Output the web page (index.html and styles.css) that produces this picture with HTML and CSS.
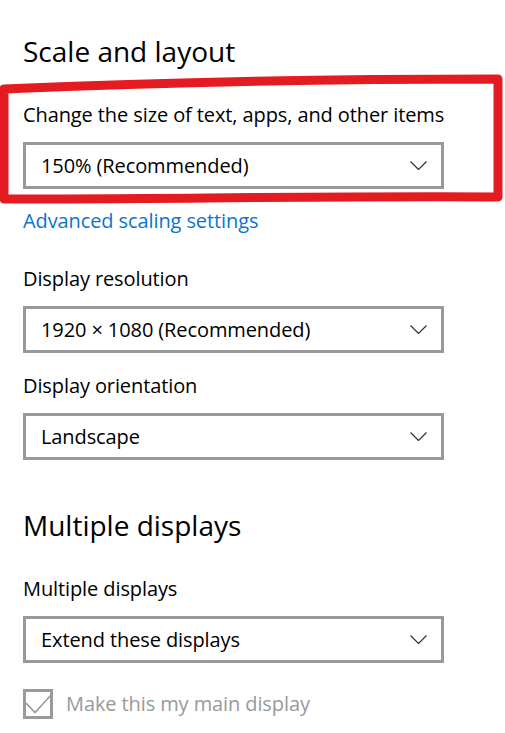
FILE: index.html
```html
<!DOCTYPE html>
<html lang="en">
<head>
<meta charset="utf-8">
<title>Display settings</title>
<link rel="stylesheet" href="styles.css">
</head>
<body>
<main class="page">
  <section class="group">
    <h2 class="heading">Scale and layout</h2>
    <div class="field">
      <div class="label">Change the size of text, apps, and other items</div>
      <div class="select">
        <span class="select-value">150% (Recommended)</span>
        <svg class="chevron" viewBox="0 0 17 9" width="17" height="9"><polyline points="0.5,0.5 8.5,8.5 16.5,0.5"/></svg>
      </div>
    </div>
    <a class="link" href="#">Advanced scaling settings</a>
    <div class="field">
      <div class="label">Display resolution</div>
      <div class="select">
        <span class="select-value">1920 × 1080 (Recommended)</span>
        <svg class="chevron" viewBox="0 0 17 9" width="17" height="9"><polyline points="0.5,0.5 8.5,8.5 16.5,0.5"/></svg>
      </div>
    </div>
    <div class="field">
      <div class="label">Display orientation</div>
      <div class="select">
        <span class="select-value">Landscape</span>
        <svg class="chevron" viewBox="0 0 17 9" width="17" height="9"><polyline points="0.5,0.5 8.5,8.5 16.5,0.5"/></svg>
      </div>
    </div>
  </section>
  <section class="group group-2">
    <h2 class="heading">Multiple displays</h2>
    <div class="field">
      <div class="label">Multiple displays</div>
      <div class="select">
        <span class="select-value">Extend these displays</span>
        <svg class="chevron" viewBox="0 0 17 9" width="17" height="9"><polyline points="0.5,0.5 8.5,8.5 16.5,0.5"/></svg>
      </div>
    </div>
    <div class="check">
      <span class="check-box">
        <svg viewBox="0 0 24 24" width="24" height="24"><polyline points="0,11 9,20.5 25,3"/></svg>
      </span>
      <span class="check-text">Make this my main display</span>
    </div>
  </section>
  <svg class="annotation" viewBox="0 0 505 733" width="505" height="733">
    <path d="M4 89 C 120 84, 300 79, 498 79 L 498 197 C 330 196, 160 199, 4 199 Z"/>
  </svg>
</main>
</body>
</html>
```
FILE: styles.css
```css
* { box-sizing: border-box; }

html, body {
  margin: 0;
  background: #ffffff;
}

body {
  font-family: "Open Sans", "Noto Sans", sans-serif;
  color: #000000;
}

.page {
  position: relative;
  width: 505px;
  height: 733px;
  overflow: hidden;
  padding: 31px 0 0 23px;
}

.heading {
  margin: 0;
  font-size: 28px;
  line-height: 40px;
  font-weight: 400;
  color: #000;
}

.group-2 {
  margin-top: 45px;
}

.field {
  margin-top: 19px;
}

.heading + .field,
.link + .field {
  margin-top: 30px;
}

.label {
  font-size: 20px;
  line-height: 28px;
  letter-spacing: -0.1px;
}

.select {
  margin-top: 13px;
  width: 421px;
  height: 47px;
  border: 3px solid #999999;
  display: flex;
  align-items: center;
  justify-content: space-between;
  padding: 0 14px 0 15px;
  font-size: 20px;
  line-height: 28px;
  letter-spacing: -0.1px;
}

.chevron {
  display: block;
  fill: none;
  stroke: #333;
  stroke-width: 1.2;
}

.link {
  display: block;
  width: max-content;
  margin-top: 18px;
  font-size: 20px;
  line-height: 28px;
  letter-spacing: -0.1px;
  color: #0a74d0;
  text-decoration: none;
}

.check {
  margin-top: 26px;
  display: flex;
  align-items: center;
  height: 30px;
}

.check-box {
  width: 30px;
  height: 30px;
  border: 3px solid #9a9a9a;
  display: flex;
  align-items: center;
  justify-content: center;
}

.check-box svg {
  display: block;
  fill: none;
  stroke: #999;
  stroke-width: 1.6;
}

.check-text {
  margin-left: 13px;
  font-size: 20px;
  line-height: 28px;
  letter-spacing: -0.1px;
  color: #999999;
}

.annotation {
  position: absolute;
  left: 0;
  top: 0;
  pointer-events: none;
  fill: none;
  stroke: #e41b20;
  stroke-width: 9;
  stroke-linejoin: round;
}
```
